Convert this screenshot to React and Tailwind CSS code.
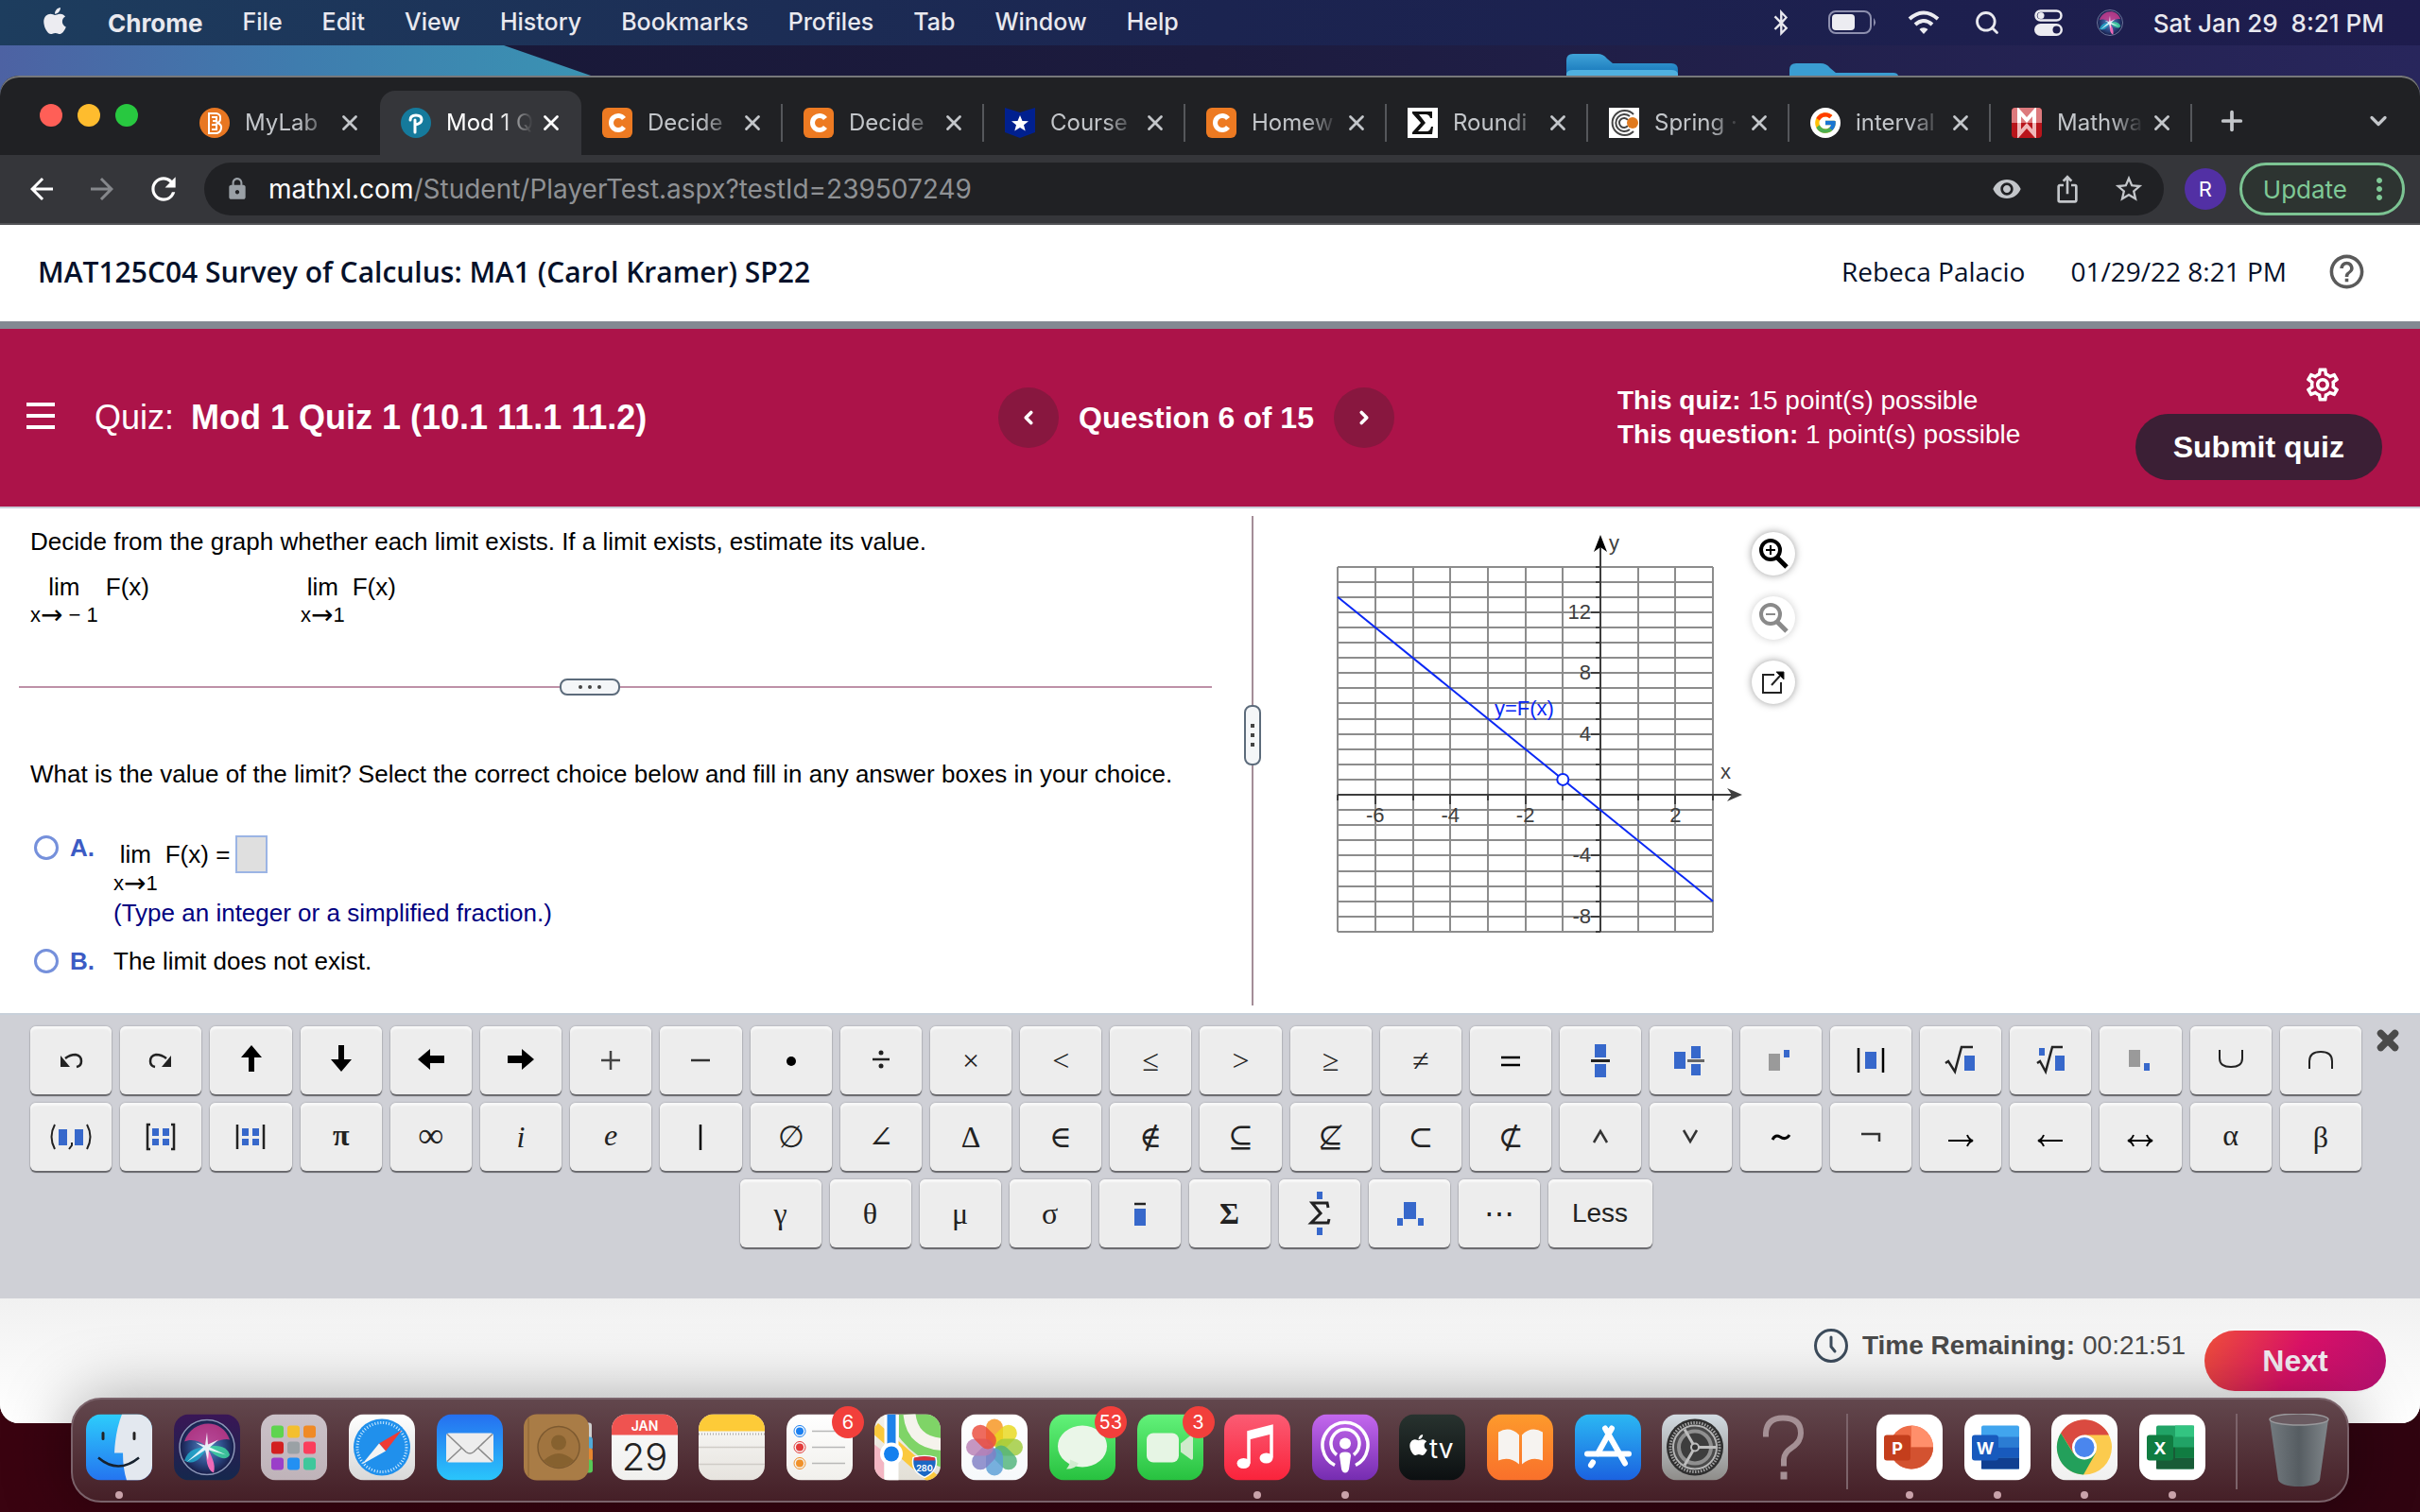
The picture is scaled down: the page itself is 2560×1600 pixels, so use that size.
import React from "react";
import { FaApple, FaBluetoothB } from "react-icons/fa";
import { FcGoogle } from "react-icons/fc";
import {
  MdArrowBack,
  MdArrowForward,
  MdHelpOutline,
  MdIosShare,
  MdLock,
  MdMoreVert,
  MdOutlineSettings,
  MdRefresh,
  MdStarBorder,
  MdVisibility,
} from "react-icons/md";
import { ChevronDown, ChevronLeft, ChevronRight, Plus, Search, X } from "lucide-react";

const BLUE = "#3768cb";

/* ================= MENU BAR ================= */

const menus = ["File", "Edit", "View", "History", "Bookmarks", "Profiles", "Tab", "Window", "Help"];

function SiriOrb({ size }) {
  return (
    <svg width={size} height={size} viewBox="0 0 60 60">
      <defs>
        <radialGradient id="orb" cx="50%" cy="50%" r="50%">
          <stop offset="0" stopColor="#5b8fc8" />
          <stop offset="0.6" stopColor="#2c4a86" />
          <stop offset="1" stopColor="#171c48" />
        </radialGradient>
      </defs>
      <circle cx="30" cy="30" r="29" fill="url(#orb)" stroke="#8c97b8" strokeWidth="1.5" />
      <path d="M6 24 C14 0 46 -2 54 22 C48 20 38 24 30 30 C24 24 14 20 6 24Z" fill="#d13a8c" opacity="0.8" />
      <path d="M6 44 C10 32 20 30 30 30 C24 42 16 50 6 44Z" fill="#22b5d6" opacity="0.75" />
      <path d="M30 30 C42 26 52 30 54 38 C50 46 38 40 30 30Z" fill="#3fd6a0" opacity="0.85" />
      <path d="M30 30 C34 38 40 48 37 57 C30 54 28 42 30 30Z" fill="#ee6ab8" />
      <path d="M30 14 L31 27 L42 22 L33 30 L50 38 L32 33 L31 44 L28 33 L8 46 L26 30 L18 25 L28 28Z" fill="#f3fbff" opacity="0.9" />
    </svg>
  );
}

function MenuBar() {
  return (
    <header className="relative flex h-12 items-center bg-gradient-to-r from-[#1d3d5e] via-[#1b2450] to-[#1e1c4d] pr-[38px] pl-[42px] text-[25px] font-medium text-[#e9e9ef]">
      <FaApple size={32} className="mb-1 text-[#ececf1]" />
      <nav className="ml-10 flex items-center gap-[42px]">
        <button className="text-[26px] font-bold">Chrome</button>
        {menus.map((m) => (
          <button key={m}>{m}</button>
        ))}
      </nav>
      <div className="ml-auto flex items-center">
        <FaBluetoothB size={28} />
        <svg className="ml-9" width="52" height="26" viewBox="0 0 52 26">
          <rect x="1" y="1" width="44" height="23" rx="7" fill="none" stroke="#8d8fae" strokeWidth="2" />
          <rect x="4" y="4" width="24" height="17" rx="4" fill="#ececf1" />
          <path d="M48 8 q4 4.5 0 9Z" fill="#8d8fae" />
        </svg>
        <svg className="ml-8" width="34" height="26" viewBox="0 0 34 26" fill="none" stroke="#ececf1" strokeWidth="4">
          <path d="M2 9 Q17 -4 32 9" />
          <path d="M8 15 Q17 7 26 15" />
          <path d="M17 25 L12.5 20 Q17 16.5 21.5 20Z" fill="#ececf1" stroke="none" />
        </svg>
        <Search size={28} className="ml-9" strokeWidth={2.4} />
        <svg className="ml-9" width="30" height="28" viewBox="0 0 30 28">
          <rect x="1.5" y="1.5" width="27" height="10" rx="5" fill="none" stroke="#ececf1" strokeWidth="2.5" />
          <circle cx="7" cy="6.5" r="3.5" fill="#ececf1" />
          <rect x="0" y="15" width="30" height="13" rx="6.5" fill="#ececf1" />
          <circle cx="23.5" cy="21.5" r="4" fill="#1d1d4d" />
        </svg>
        <div className="ml-9">
          <SiriOrb size={28} />
        </div>
        <span className="ml-8 text-[26px] whitespace-pre">Sat Jan 29  8:21 PM</span>
      </div>
    </header>
  );
}

function Wallpaper() {
  return (
    <div className="absolute inset-x-0 top-12 h-20 bg-gradient-to-r from-[#171735] via-[#1c1b3e] to-[#28265c]">
      <svg width="100%" height="80">
        <defs>
          <linearGradient id="sweep" x1="0" y1="0" x2="1" y2="0">
            <stop offset="0" stopColor="#4d62a3" />
            <stop offset="0.5" stopColor="#3f7cae" />
            <stop offset="1" stopColor="#3a93b3" />
          </linearGradient>
          <linearGradient id="folder" x1="0" y1="0" x2="0" y2="1">
            <stop offset="0" stopColor="#3fa3d8" />
            <stop offset="1" stopColor="#1574b8" />
          </linearGradient>
        </defs>
        <path d="M0 0 H533 L625 32 V80 H0Z" fill="url(#sweep)" />
        <path d="M1657 32 V16 Q1657 9 1664 9 H1690 Q1696 9 1700 14 L1706 19 H1768 Q1775 19 1775 26 V32Z" fill="url(#folder)" />
        <path d="M1657 32 V30 Q1658 26 1664 26 H1768 Q1774 26 1775 30 V32Z" fill="#4fb0df" />
        <path d="M1893 32 V26 Q1893 19 1900 19 H1926 Q1932 19 1936 24 L1942 29 H2003 Q2007 29 2008 32Z" fill="#3a9dd2" />
      </svg>
    </div>
  );
}

/* ================= BROWSER CHROME ================= */

const CheggIcon = () => (
  <svg width="32" height="32" viewBox="0 0 32 32">
    <rect width="32" height="32" rx="6" fill="#ed7a22" />
    <path d="M23 11.5 A7.5 7.5 0 1 0 23 20.5" fill="none" stroke="#fff" strokeWidth="5" />
  </svg>
);

const favicons = {
  mylab: (
    <svg width="32" height="32" viewBox="0 0 32 32">
      <circle cx="16" cy="16" r="16" fill="#e87722" />
      <path d="M10 6 H18 Q23 7 22 12 Q22 15 19 16 Q24 18 23 22 Q22 27 17 27 H10Z M13 10 H18 V14 H14 M13 18 H18 V23 H13 M10 6 V27" fill="none" stroke="#fff" strokeWidth="2" />
    </svg>
  ),
  pearson: (
    <svg width="32" height="32" viewBox="0 0 32 32">
      <circle cx="16" cy="16" r="16" fill="#157a9c" />
      <path d="M10 13 Q10 8 16 8 Q22 8 22 12.5 Q22 17 15 18 M15 13 V26" fill="none" stroke="#fff" strokeWidth="3" strokeLinecap="round" />
    </svg>
  ),
  chegg: <CheggIcon />,
  star: (
    <svg width="32" height="32" viewBox="0 0 32 32">
      <path d="M0 0 L16 5 L32 0 V26 L16 32 L0 26Z" fill="#00208f" />
      <path d="M16 8 L18.5 14 L25 14.3 L20 18.3 L21.7 24.5 L16 21 L10.3 24.5 L12 18.3 L7 14.3 L13.5 14Z" fill="#fff" />
    </svg>
  ),
  sigma: (
    <svg width="32" height="32" viewBox="0 0 32 32">
      <rect width="32" height="32" fill="#fff" />
      <path d="M5 4 H26 V11 H24 Q23 7 19 7 H12 L19 16 L11 25 H20 Q24 25 25 20 H27 L26 28 H5 V26 L14 16 L5 6Z" fill="#111" />
    </svg>
  ),
  spring: (
    <svg width="32" height="32" viewBox="0 0 32 32">
      <rect width="32" height="32" fill="#fff" />
      <path d="M26 7 A13 13 0 1 0 26 25 M22 9 A9 9 0 1 0 22 23 M20 13 A5 5 0 1 0 20 19" fill="none" stroke="#444" strokeWidth="2" />
      <circle cx="25" cy="16" r="6" fill="#e07a1f" />
    </svg>
  ),
  google: (
    <span className="flex size-8 items-center justify-center rounded-full bg-white">
      <FcGoogle size={26} />
    </span>
  ),
  mathway: (
    <svg width="32" height="32" viewBox="0 0 32 32">
      <rect width="32" height="32" rx="4" fill="#b9151b" />
      <path d="M0 16 V4 Q0 0 4 0 H28 Q32 0 32 4 V16Z" fill="#dd7a7d" />
      <path d="M8 16 V4 L16 13 L24 4 V16" fill="none" stroke="#fff" strokeWidth="4" />
      <path d="M8 16 V28 L16 19 L24 28 V16" fill="none" stroke="#f0b8b9" strokeWidth="4" />
    </svg>
  ),
};

const tabs = [
  { icon: "mylab", title: "MyLab" },
  { icon: "pearson", title: "Mod 1 Q", active: true },
  { icon: "chegg", title: "Decide" },
  { icon: "chegg", title: "Decide" },
  { icon: "star", title: "Course" },
  { icon: "chegg", title: "Homew" },
  { icon: "sigma", title: "Roundi" },
  { icon: "spring", title: "Spring ·" },
  { icon: "google", title: "interval" },
  { icon: "mathway", title: "Mathwa" },
];

function Tab({ tab, divider }) {
  return (
    <div
      className={
        tab.active
          ? "flex h-[68px] w-[213px] items-center self-end rounded-t-2xl bg-[#35363a] pl-[22px] text-white"
          : "flex h-[68px] w-[213px] items-center self-end pl-[22px] text-[#c3c6ca]"
      }
    >
      <span className="shrink-0">{favicons[tab.icon]}</span>
      <button className="ml-4 w-24 text-left text-2xl whitespace-nowrap [mask-image:linear-gradient(to_right,black_60%,transparent_96%)]">
        {tab.title}
      </button>
      <button aria-label="Close tab" className="ml-0.5">
        <X size={26} strokeWidth={2.6} />
      </button>
      {divider && <span className="ml-auto h-10 w-0.5 bg-[#55575b]" />}
    </div>
  );
}

function TabStrip() {
  return (
    <div className="flex h-[84px] items-center pr-[30px]">
      <div className="flex w-[189px] shrink-0 gap-4 pl-[42px]">
        <button aria-label="Close" className="size-6 rounded-full bg-[#ff5f57]" />
        <button aria-label="Minimise" className="size-6 rounded-full bg-[#febc2e]" />
        <button aria-label="Zoom" className="size-6 rounded-full bg-[#28c840]" />
      </div>
      {tabs.map((tab, i) => (
        <Tab key={i} tab={tab} divider={i > 1} />
      ))}
      <button aria-label="New tab" className="ml-[26px] pt-3 text-[#c3c6ca]">
        <Plus size={32} strokeWidth={2.8} />
      </button>
      <button aria-label="Search tabs" className="ml-auto pt-3 text-[#c3c6ca]">
        <ChevronDown size={28} strokeWidth={2.8} />
      </button>
    </div>
  );
}

function Toolbar() {
  return (
    <div className="flex h-[74px] items-center border-b-2 border-[#515256] bg-[#35363a] pr-4 pl-[26px]">
      <button aria-label="Back" className="text-white">
        <MdArrowBack size={36} />
      </button>
      <button aria-label="Forward" className="ml-7 text-[#85878b]">
        <MdArrowForward size={36} />
      </button>
      <button aria-label="Reload" className="ml-7 text-white">
        <MdRefresh size={38} />
      </button>
      <div className="ml-6 flex h-14 flex-1 items-center rounded-full bg-[#202124] pr-5 pl-[22px] text-[#c3c6ca]">
        <MdLock size={26} className="text-[#9aa0a6]" />
        <div role="textbox" aria-label="Address" className="ml-5 text-[28px] text-[#8f9194]">
          <span className="text-white">mathxl.com</span>/Student/PlayerTest.aspx?testId=239507249
        </div>
        <div className="ml-auto flex items-center gap-8">
          <button aria-label="Site visibility">
            <MdVisibility size={32} />
          </button>
          <button aria-label="Share">
            <MdIosShare size={32} />
          </button>
          <button aria-label="Bookmark">
            <MdStarBorder size={34} />
          </button>
        </div>
      </div>
      <button className="ml-[22px] size-11 rounded-full bg-[#5230a4] text-[22px] text-white">R</button>
      <button className="ml-3.5 flex h-14 items-center rounded-full border-3 border-[#7cc493] bg-[#2d3431] pr-1.5 pl-[22px] text-[26px] text-[#7fc996]">
        Update
        <MdMoreVert size={36} className="ml-4" />
      </button>
    </div>
  );
}

/* ================= QUIZ HEADER ================= */

function CourseBar() {
  return (
    <div className="flex h-[110px] items-center border-b-8 border-[#838992] bg-white pr-[56px] pb-1 pl-10 font-['Open_Sans',sans-serif] text-[28px] text-[#05112a]">
      <h1 className="mr-auto text-[30px] font-semibold">
        MAT125C04 Survey of Calculus: MA1 (Carol Kramer) SP22
      </h1>
      <span>Rebeca Palacio</span>
      <span className="ml-12">01/29/22 8:21 PM</span>
      <button aria-label="Help" className="ml-[42px] text-[#5a5a5a]">
        <MdHelpOutline size={43} />
      </button>
    </div>
  );
}

function QuizBar() {
  return (
    <div className="grid h-[190px] grid-cols-[1056fr_655fr_849fr] items-center border-b-2 border-[#c9ced8] bg-[#ac1349] text-white">
      <div className="flex items-center pl-7">
        <button aria-label="Menu" className="mb-1 flex w-[30px] flex-col gap-2">
          <span className="h-1 bg-white" />
          <span className="h-1 bg-white" />
          <span className="h-1 bg-white" />
        </button>
        <h2 className="ml-[42px] flex gap-[18px] text-[36px]">
          Quiz: <b>Mod 1 Quiz 1 (10.1 11.1 11.2)</b>
        </h2>
      </div>
      <div className="flex items-center gap-[21px]">
        <button aria-label="Previous question" className="flex size-16 items-center justify-center rounded-full bg-[#88173f]">
          <ChevronLeft size={22} strokeWidth={4} />
        </button>
        <span className="text-[32px] font-bold">Question 6 of 15</span>
        <button aria-label="Next question" className="flex size-16 items-center justify-center rounded-full bg-[#88173f]">
          <ChevronRight size={22} strokeWidth={4} />
        </button>
      </div>
      <div className="flex items-center justify-between pr-10">
        <div className="text-[28px] leading-9">
          <p>
            <b>This quiz:</b> 15 point(s) possible
          </p>
          <p>
            <b>This question:</b> 1 point(s) possible
          </p>
        </div>
        <div className="flex flex-col items-end gap-2.5 pt-2.5">
          <button aria-label="Settings" className="mr-[42px]">
            <MdOutlineSettings size={42} />
          </button>
          <button className="h-[70px] rounded-full bg-[#3b1f35] px-10 text-[32px] font-bold">Submit quiz</button>
        </div>
      </div>
    </div>
  );
}

/* ================= QUESTION ================= */

const Arrow = () => <span className="font-['DejaVu_Sans',sans-serif] text-[28px] leading-none">→</span>;

function Limit({ to, children }) {
  return (
    <div className="grid grid-cols-[auto_auto] items-center gap-x-2">
      <span className="h-[30px] text-center">lim</span>
      <span className="flex h-[30px] items-center">{children}</span>
      <span className="flex h-[30px] items-center text-[22px] whitespace-pre">
        x<Arrow />
        {to}
      </span>
    </div>
  );
}

function Problem() {
  return (
    <section className="pt-5 text-[26px] leading-[30px] text-black">
      <p className="pl-8">Decide from the graph whether each limit exists. If a limit exists, estimate its value.</p>
      <div className="mt-[18px] flex gap-40 pl-8">
        <Limit to=" − 1">F(x)</Limit>
        <Limit to="1">F(x)</Limit>
      </div>

      <div className="mt-[52px] mr-[34px] ml-5 flex items-center">
        <span className="h-0.5 w-[572px] bg-[#be91a7]" />
        <button aria-label="Resize panel" className="flex h-[18px] w-16 items-center justify-center gap-1.5 rounded-lg border-2 border-[#5c6b7b] bg-[#f4f6f8]">
          <i className="size-1 rounded-full bg-[#444]" />
          <i className="size-1 rounded-full bg-[#444]" />
          <i className="size-1 rounded-full bg-[#444]" />
        </button>
        <span className="h-0.5 flex-1 bg-[#be91a7]" />
      </div>

      <p className="mt-[68px] pl-8">
        What is the value of the limit? Select the correct choice below and fill in any answer boxes in your choice.
      </p>

      <div className="mt-[50px] flex pl-9">
        <input id="choice-a" type="radio" name="choice" className="size-[26px] appearance-none rounded-full border-3 border-[#7590db] bg-white" />
        <label htmlFor="choice-a" className="ml-3 w-[46px] leading-[26px] font-bold text-[#3c5bc4]">
          A.
        </label>
        <div>
          <div className="grid grid-cols-[auto_1fr] items-center gap-x-2">
            <span className="text-center">lim</span>
            <span className="flex items-center gap-1.5">
              F(x) =
              <input aria-label="Answer" className="h-10 w-[34px] border-2 border-[#9bb4e4] bg-[#dfdfdf]" />
            </span>
            <span className="flex h-[22px] items-center text-[22px] whitespace-pre">
              x<Arrow />1
            </span>
          </div>
          <p className="mt-1 leading-8 text-[#000080]">(Type an integer or a simplified fraction.)</p>
        </div>
      </div>

      <div className="mt-[22px] flex items-center pl-9 leading-[26px]">
        <input id="choice-b" type="radio" name="choice" className="size-[26px] appearance-none rounded-full border-3 border-[#7590db] bg-white" />
        <label htmlFor="choice-b" className="flex">
          <b className="ml-3 w-[46px] text-[#3c5bc4]">B.</b>
          The limit does not exist.
        </label>
      </div>
    </section>
  );
}

// plot origin and the pixels per unit on each axis
const OX = 293;
const OY = 283;
const px = (x) => OX + x * 39.7;
const py = (y) => OY - y * 16.1;

function Graph() {
  const cols = Array.from({ length: 11 }, (_, i) => i - 7);
  const rows = Array.from({ length: 25 }, (_, i) => i - 9);

  return (
    <svg width="446" height="440" viewBox="0 0 446 440" fontSize="22" fill="#404040" className="overflow-visible">
      <g stroke="#8c8c8c" strokeWidth="2" shapeRendering="crispEdges">
        {cols.map((x) => (
          <line key={x} x1={px(x)} x2={px(x)} y1={py(15)} y2={py(-9)} />
        ))}
        {rows.map((y) => (
          <line key={y} x1={px(-7)} x2={px(3)} y1={py(y)} y2={py(y)} />
        ))}
      </g>
      <g stroke="#3d3d3d" strokeWidth="2" shapeRendering="crispEdges">
        <line x1={px(-7)} x2="432" y1={OY} y2={OY} />
        <line x1={OX} x2={OX} y1="20" y2={py(-9)} />
        {cols.map((x) => (
          <line key={x} x1={px(x)} x2={px(x)} y1={OY} y2={x % 2 ? OY + 6 : OY + 10} />
        ))}
        {rows.map((y) => (
          <line key={y} x1={y % 4 ? OX - 5 : OX - 10} x2={OX} y1={py(y)} y2={py(y)} />
        ))}
      </g>
      <path d="M293 8 L300 26 L293 21 L286 26Z" fill="#000" />
      <path d="M443 283 L427 290 L432 283 L427 276Z" />
      <text x="302" y="24">y</text>
      <text x="420" y="266">x</text>
      {[12, 8, 4, -4, -8].map((y) => (
        <text key={y} x={OX - 10} y={py(y) + 7} textAnchor="end">{y}</text>
      ))}
      {[-6, -4, -2, 2].map((x) => (
        <text key={x} x={px(x)} y={OY + 29} textAnchor="middle">{x}</text>
      ))}
      <line x1={px(-7)} y1={py(13)} x2={px(3)} y2={py(-7)} stroke="#0a28f5" strokeWidth="2" />
      <text x="181" y="199" fill="#0a28f5">y=F(x)</text>
      <circle cx={px(-1)} cy={py(1)} r="6" fill="#fff" stroke="#0a28f5" strokeWidth="2" />
    </svg>
  );
}

const roundBtn = "flex size-[46px] items-center justify-center rounded-full bg-white shadow-[0_0_8px_rgba(0,0,0,0.4)]";

function GraphPanel() {
  return (
    <section className="flex gap-[7px] pt-5 pl-[66px]">
      <Graph />
      <div className="flex flex-col gap-[22px] pt-[5px]">
        <button aria-label="Zoom in" className={roundBtn}>
          <svg width="32" height="32" viewBox="0 0 32 32" fill="none" stroke="#000">
            <circle cx="13" cy="12" r="10" strokeWidth="4" />
            <path d="M20 20 L30 30" strokeWidth="5" />
            <path d="M8 12 H18 M13 7 V17" strokeWidth="2" />
          </svg>
        </button>
        <button aria-label="Zoom out" className="flex size-[46px] items-center justify-center rounded-full bg-white shadow-[0_0_8px_rgba(0,0,0,0.2)]">
          <svg width="32" height="32" viewBox="0 0 32 32" fill="none" stroke="#8a8a8a">
            <circle cx="13" cy="12" r="10" strokeWidth="4" />
            <path d="M20 20 L30 30" strokeWidth="5" />
            <path d="M8 12 H18" strokeWidth="2" />
          </svg>
        </button>
        <button aria-label="Open in new window" className={roundBtn}>
          <svg width="26" height="26" viewBox="0 0 26 26" fill="none" stroke="#222" strokeWidth="2">
            <path d="M14 5 H2 V24 H21 V13" />
            <path d="M11 16 L21 5" />
            <path d="M16 2 H24 V10Z" fill="#000" strokeWidth="1" />
          </svg>
        </button>
      </div>
    </section>
  );
}

/* ================= MATH KEYPAD ================= */

// blue placeholder squares of the template keys
const B = ({ x, y, w, h, fill = BLUE }) => <rect x={x} y={y} width={w} height={h} fill={fill} />;

const Draw = ({ children }) => (
  <svg width="46" height="46" viewBox="0 0 46 46" fill="none" stroke="#222" strokeWidth="2">
    <g>{children}</g>
  </svg>
);

const nofill = { stroke: "none" };

const glyphs = {
  undo: <Draw><path d="M17 21 Q22 17 28 17 Q34 18 34 24 Q34 29 29 30" strokeWidth="2.5" /><path d="M12 18 V30 H22Z" fill="#222" {...nofill} /></Draw>,
  redo: <Draw><path d="M29 21 Q24 17 18 17 Q12 18 12 24 Q12 29 17 30" strokeWidth="2.5" /><path d="M34 18 V30 H24Z" fill="#222" {...nofill} /></Draw>,
  up: <Draw><path d="M24 7 L35 20 H27 V35 H21 V20 H13Z" fill="#000" {...nofill} /></Draw>,
  down: <Draw><path d="M23 35 L34 22 H26 V7 H20 V22 H12Z" fill="#000" {...nofill} /></Draw>,
  left: <Draw><path d="M9 22 L22 11 V18 H37 V26 H22 V33Z" fill="#000" {...nofill} /></Draw>,
  right: <Draw><path d="M37 22 L24 11 V18 H9 V26 H24 V33Z" fill="#000" {...nofill} /></Draw>,
  plus: <Draw><path d="M13 23 H33 M23 13 V33" stroke="#444" strokeWidth="2.5" /></Draw>,
  minus: <Draw><path d="M13 23 H33" stroke="#333" strokeWidth="2.5" /></Draw>,
  dot: <Draw><circle cx="23" cy="24" r="5" fill="#000" {...nofill} /></Draw>,
  divide: <Draw><path d="M14 22 H32" strokeWidth="2.5" /><circle cx="23" cy="15" r="2.5" fill="#222" {...nofill} /><circle cx="23" cy="29" r="2.5" fill="#222" {...nofill} /></Draw>,
  equals: <Draw><path d="M13 20 H33 M13 28 H33" stroke="#000" strokeWidth="2.5" /></Draw>,
  pipe: <Draw><path d="M23 10 V37" stroke="#000" strokeWidth="2.5" /></Draw>,
  tilde: <Draw><path d="M14 26 Q17 20 22 23 Q28 27 32 21" stroke="#000" strokeWidth="3" /></Draw>,
  not: <Draw><path d="M13 20 H32 V28" stroke="#333" strokeWidth="2.5" /></Draw>,
  and: <Draw><path d="M16 29 L23 17 L30 29" stroke="#333" strokeWidth="2.5" /></Draw>,
  or: <Draw><path d="M16 16 L23 28 L30 16" stroke="#333" strokeWidth="2.5" /></Draw>,
  rarr: <Draw><path d="M10 27 H36 M30 21 Q32 26 36 27 Q32 28 30 33" stroke="#000" /></Draw>,
  larr: <Draw><path d="M36 27 H10 M16 21 Q14 26 10 27 Q14 28 16 33" stroke="#000" /></Draw>,
  lrarr: <Draw><path d="M10 27 H36 M30 21 Q32 26 36 27 Q32 28 30 33 M16 21 Q14 26 10 27 Q14 28 16 33" stroke="#000" /></Draw>,
  frac: <Draw><g {...nofill}><B x={17} y={6} w={12} h={14} /><B x={17} y={27} w={12} h={14} /></g><path d="M13 23.5 H33" strokeWidth="3" /></Draw>,
  mixed: <Draw><g {...nofill}><B x={6} y={14} w={12} h={18} /><B x={24} y={8} w={10} h={13} /><B x={24} y={27} w={10} h={12} /></g><path d="M20 23.5 H38" stroke="#666" strokeWidth="3" /></Draw>,
  sup: <Draw><g {...nofill}><B x={10} y={16} w={12} h={18} fill="#9a9a9a" /><B x={26} y={12} w={6} h={8} /></g></Draw>,
  abs: <Draw><g {...nofill}><B x={17} y={14} w={12} h={18} /></g><path d="M10 10 V36 M36 10 V36" stroke="#000" strokeWidth="2.5" /></Draw>,
  sqrt: <Draw><path d="M7 26 L10 24 L17 35 L24 9 H36" strokeWidth="2.5" /><g {...nofill}><B x={27} y={18} w={11} h={16} /></g></Draw>,
  root: <Draw><path d="M9 26 L12 24 L18 35 L25 9 H36" strokeWidth="2.5" /><g {...nofill}><B x={11} y={10} w={6} h={8} /><B x={28} y={18} w={10} h={16} /></g></Draw>,
  sub: <Draw><g {...nofill}><B x={11} y={12} w={12} h={18} fill="#9a9a9a" /><B x={27} y={26} w={6} h={8} /></g></Draw>,
  cup: <Draw><path d="M11 12 V21 Q11 30 23 30 Q35 30 35 21 V12" /></Draw>,
  cap: <Draw><path d="M11 32 V24 Q11 14 23 14 Q35 14 35 24 V32" /></Draw>,
  pair: <Draw><path d="M6 10 Q-1 23 6 36 M40 10 Q47 23 40 36" /><g {...nofill}><B x={10} y={15} w={9} h={17} /><B x={27} y={15} w={9} h={17} /></g><path d="M24 29 V32 L21 36" /></Draw>,
  matrix: <Draw><path d="M12 10 H9 V36 H12 M34 10 H37 V36 H34" strokeWidth="2.5" /><g {...nofill}><B x={14} y={14} w={7} h={8} /><B x={25} y={14} w={7} h={8} /><B x={14} y={25} w={7} h={7} /><B x={25} y={25} w={7} h={7} /></g></Draw>,
  det: <Draw><path d="M9 10 V36 M37 10 V36" strokeWidth="2.5" /><g {...nofill}><B x={14} y={14} w={7} h={8} /><B x={25} y={14} w={7} h={8} /><B x={14} y={25} w={7} h={7} /><B x={25} y={25} w={7} h={7} /></g></Draw>,
  bar: <Draw><path d="M17 13 H29" strokeWidth="2.5" /><g {...nofill}><B x={17} y={18} w={12} h={18} /></g></Draw>,
  limits: <Draw><path d="M32 17 L31 12 H15 L24 23 L14 33 H32 L33 29" strokeWidth="3" /><g {...nofill}><B x={20} y={0} w={6} h={8} /><B x={20} y={38} w={6} h={8} /></g></Draw>,
  tri: <Draw><g {...nofill}><B x={17} y={11} w={13} h={18} /><B x={10} y={28} w={6} h={8} /><B x={32} y={28} w={6} h={8} /></g></Draw>,
};

const keyRows = [
  ["undo", "redo", "up", "down", "left", "right", "plus", "minus", "dot", "divide", "×", "<", "≤", ">", "≥", "≠", "equals", "frac", "mixed", "sup", "abs", "sqrt", "root", "sub", "cup", "cap"],
  ["pair", "matrix", "det", "π", "∞", "i", "e", "pipe", "∅", "∠", "Δ", "∈", "∉", "⊆", "⊈", "⊂", "⊄", "and", "or", "tilde", "not", "rarr", "larr", "lrarr", "α", "β"],
  ["γ", "θ", "μ", "σ", "bar", "Σ", "limits", "tri", "⋯"],
];

const keyCls =
  "flex h-[72px] items-center justify-center rounded-md bg-[#ededed] text-[#222] shadow-[0_2px_1px_#66666a,0_0_2px_#8e8e94,inset_0_3px_2px_#f8f8f8]";

const keyStyle = {
  i: "italic",
  e: "italic pb-1",
  π: "font-bold pb-1",
  Σ: "font-bold",
  "∞": "text-[38px] pb-1",
  α: "pb-1",
};

function Key({ k, size }) {
  return (
    <button aria-label={k} className={`${keyCls} ${size} ${keyStyle[k] || ""}`}>
      {glyphs[k] || <span>{k}</span>}
    </button>
  );
}

function Keypad() {
  return (
    <section className="flex items-start gap-4 border-t-2 border-[#c8d0da] bg-[#cfd0d6] pt-3 pr-[22px] pb-[54px] pl-8">
      <div className="flex flex-1 flex-col gap-[9px] font-['Liberation_Serif','DejaVu_Serif',serif] text-[32px] leading-none">
        <div className="flex gap-[9px]">
          {keyRows[0].map((k) => (
            <Key key={k} k={k} size="flex-1" />
          ))}
        </div>
        <div className="flex gap-[9px]">
          {keyRows[1].map((k) => (
            <Key key={k} k={k} size="flex-1" />
          ))}
        </div>
        <div className="flex justify-center gap-[9px]">
          {keyRows[2].map((k) => (
            <Key key={k} k={k} size="w-[86px]" />
          ))}
          <button className={`${keyCls} w-[110px] font-['Liberation_Sans',sans-serif] text-[28px]`}>Less</button>
        </div>
      </div>
      <button aria-label="Close keypad" className="text-[#4a4a4a]">
        <X size={30} strokeWidth={6} className="-mx-[3px]" />
      </button>
    </section>
  );
}

function Footer() {
  return (
    <footer className="flex h-[132px] items-start justify-end bg-gradient-to-b from-[#f1f1f1] to-white pt-[34px] pr-9 text-[28px] text-[#4a4a4a]">
      <div className="mr-5 flex h-8 items-center">
        <svg width="38" height="38" viewBox="0 0 38 38" fill="none" stroke="#3d4c5c" strokeWidth="3">
          <circle cx="19" cy="19" r="16.5" />
          <path d="M19 10 V20 L23 25" strokeLinecap="round" />
        </svg>
        <b className="ml-3.5">Time Remaining:</b>
        <span className="ml-2">00:21:51</span>
      </div>
      <button className="h-16 w-48 rounded-full bg-[linear-gradient(115deg,#f0503a,#db1168_50%,#b3106f)] text-[32px] font-bold text-[#f3eef3] shadow-[0_0_0_2px_#f8f8f8]">
        Next
      </button>
    </footer>
  );
}

/* ================= DOCK ================= */

const Tile = ({ id, from, to, children }) => (
  <svg width="70" height="71" viewBox="0 0 70 70">
    <defs>
      <linearGradient id={`tile-${id}`} x1="0" y1="0" x2="0" y2="1">
        <stop offset="0" stopColor={from} />
        <stop offset="1" stopColor={to} />
      </linearGradient>
      <clipPath id={`clip-${id}`}>
        <rect width="70" height="70" rx="16" />
      </clipPath>
    </defs>
    <g clipPath={`url(#clip-${id})`}>
      <rect width="70" height="70" fill={`url(#tile-${id})`} />
      {children}
    </g>
  </svg>
);

const launchColors = ["#5fd44f", "#f3bf2e", "#f08a26", "#d3201f", "#9aa1a5", "#fb3e5c", "#9a3fc9", "#2390f2", "#3fc79b"];
const petals = ["#f7941d", "#e8d81c", "#9fcb3a", "#4fb37a", "#5a9fd6", "#7f7fc4", "#b87fb5", "#ea4a3a"];
const appFont = "Inter, sans-serif";

const OfficeBadge = ({ fill, letter }) => (
  <>
    <rect x="8" y="22" width="28" height="27" rx="3" fill={fill} />
    <text x="22" y="42" textAnchor="middle" fontSize="18" fontWeight="700" fill="#fff" fontFamily={appFont}>
      {letter}
    </text>
  </>
);

const apps = [
  {
    name: "Finder",
    running: true,
    icon: (
      <Tile id="finder" from="#2dcdfb" to="#2474f0">
        <path d="M38 0 Q31 18 30 41 H39 Q39 58 43 70 H70 V0Z" fill="#e3e8ef" />
        <path d="M18 20 V26 M51 20 V26" stroke="#222" strokeWidth="3" strokeLinecap="round" />
        <path d="M13 46 Q34 64 56 46" fill="none" stroke="#16212e" strokeWidth="2.5" />
      </Tile>
    ),
  },
  {
    name: "Siri",
    icon: (
      <Tile id="siri" from="#3a1656" to="#14284d">
        <g transform="translate(5 5)">
          <SiriOrb size={60} />
        </g>
      </Tile>
    ),
  },
  {
    name: "Launchpad",
    icon: (
      <Tile id="launch" from="#cbc2c9" to="#bfb3b9">
        {launchColors.map((c, i) => (
          <rect key={c} x={11 + (i % 3) * 17} y={12 + Math.floor(i / 3) * 17} width="13" height="13" rx="3" fill={c} />
        ))}
      </Tile>
    ),
  },
  {
    name: "Safari",
    icon: (
      <Tile id="safari" from="#ffffff" to="#d8d8d8">
        <circle cx="35" cy="35" r="30" fill="#2090ec" />
        <circle cx="35" cy="35" r="26" fill="none" stroke="#d8efff" strokeWidth="3" strokeDasharray="1 2" />
        <path d="M56 17 L39 39 L32 31Z" fill="#ef3b34" />
        <path d="M14 53 L32 31 L39 39Z" fill="#f4f4f4" />
      </Tile>
    ),
  },
  {
    name: "Mail",
    icon: (
      <Tile id="mail" from="#256ff0" to="#2ac6fb">
        <rect x="10" y="20" width="50" height="31" rx="3" fill="#ededed" />
        <path d="M11 21 L31 40 Q35 43 39 40 L59 21 M11 50 L26 36 M59 50 L44 36" fill="none" stroke="#8b8b8b" strokeWidth="1.5" />
      </Tile>
    ),
  },
  {
    name: "Contacts",
    icon: (
      <svg width="74" height="71" viewBox="0 0 74 70" className="-mr-1">
        <rect x="60" y="9" width="12" height="18" rx="3" fill="#cfcfcf" />
        <rect x="60" y="24" width="13" height="14" rx="3" fill="#4fa9d8" />
        <rect x="60" y="36" width="13" height="14" rx="3" fill="#e8862f" />
        <rect x="60" y="48" width="13" height="14" rx="3" fill="#57c955" />
        <rect width="69" height="70" rx="14" fill="#a97c46" />
        <path d="M5 4 V66" stroke="#8a6233" />
        <circle cx="37" cy="35" r="22" fill="#a0743f" stroke="#7d5a30" strokeWidth="1.5" />
        <circle cx="37" cy="30" r="8" fill="#86612f" />
        <path d="M21 49 Q37 34 53 49 Q37 64 21 49Z" fill="#86612f" />
      </svg>
    ),
  },
  {
    name: "Calendar",
    icon: (
      <Tile id="calendar" from="#fbfbfb" to="#f0f0ee">
        <rect width="70" height="22" fill="#ef5350" />
        <text x="35" y="17" textAnchor="middle" fontSize="14" fontWeight="600" fill="#fff" fontFamily={appFont}>JAN</text>
        <text x="35" y="59" textAnchor="middle" fontSize="40" fontWeight="300" fill="#222" fontFamily={appFont}>29</text>
      </Tile>
    ),
  },
  {
    name: "Notes",
    icon: (
      <Tile id="notes" from="#fafaf8" to="#e6e3de">
        <rect width="70" height="18" fill="#fdcb38" />
        <path d="M0 21 H70" stroke="#aaa" strokeWidth="2" strokeDasharray="1 2" />
        <path d="M0 35 H70 M0 53 H70" stroke="#cfccc7" strokeWidth="1.5" />
      </Tile>
    ),
  },
  {
    name: "Reminders",
    badge: "6",
    icon: (
      <Tile id="reminders" from="#ffffff" to="#f1f0ec">
        {["#1a7ff0", "#e23b3b", "#f0912a"].map((c, i) => (
          <g key={c}>
            <circle cx="14" cy={18 + i * 17} r="4" fill={c} />
            <circle cx="14" cy={18 + i * 17} r="6" fill="none" stroke={c} />
            <path d={`M27 ${18 + i * 17} H62`} stroke="#b8b8b8" strokeWidth="1.5" />
          </g>
        ))}
      </Tile>
    ),
  },
  {
    name: "Maps",
    icon: (
      <Tile id="maps" from="#f3f1ea" to="#e2dfd6">
        <path d="M26 0 H70 V56 Q42 46 26 24Z" fill="#7fd467" />
        <path d="M37 0 Q40 30 72 32" fill="none" stroke="#f5f3ec" strokeWidth="13" />
        <path d="M0 14 L66 72" stroke="#fbc93d" strokeWidth="12" />
        <path d="M0 32 V70 H10 V40Z" fill="#f3b6c3" />
        <path d="M18 0 V70" stroke="#fff" strokeWidth="15" />
        <path d="M18 0 V40" stroke="#1d82ea" strokeWidth="9" />
        <circle cx="18" cy="42" r="12" fill="#fff" />
        <circle cx="18" cy="42" r="8" fill="#1480ee" />
        <path d="M41 46 Q53 42 65 46 Q68 60 53 67 Q38 60 41 46Z" fill="#1b68c4" stroke="#fff" strokeWidth="1.5" />
        <path d="M42 49 V46 Q53 43 64 46 V49Z" fill="#d8323c" />
        <text x="53" y="60" textAnchor="middle" fontSize="9" fontWeight="700" fill="#fff" fontFamily={appFont}>280</text>
      </Tile>
    ),
  },
  {
    name: "Photos",
    icon: (
      <Tile id="photos" from="#ffffff" to="#f6f9fb">
        {petals.map((c, i) => (
          <rect key={c} x="26" y="5" width="18" height="29" rx="9" fill={c} opacity="0.82" transform={`rotate(${i * 45} 35 35)`} />
        ))}
      </Tile>
    ),
  },
  {
    name: "Messages",
    badge: "53",
    icon: (
      <Tile id="messages" from="#63f27a" to="#27c13f">
        <ellipse cx="35" cy="34" rx="26" ry="22" fill="#eaf6e8" />
        <path d="M22 48 Q22 54 18 58 Q28 58 31 52Z" fill="#d3ecd0" />
      </Tile>
    ),
  },
  {
    name: "FaceTime",
    badge: "3",
    icon: (
      <Tile id="facetime" from="#63f27a" to="#27c13f">
        <rect x="10" y="20" width="34" height="31" rx="7" fill="#e6f5e4" />
        <path d="M46 31 L57 22 Q59 22 59 25 V46 Q59 49 57 48 L46 40Z" fill="#cfeacb" />
      </Tile>
    ),
  },
  {
    name: "Music",
    running: true,
    icon: (
      <Tile id="music" from="#fb5c74" to="#fa233b">
        <path d="M26 52 V19 L50 13 V46" fill="none" stroke="#fff" strokeWidth="3.5" />
        <path d="M26 19 L50 13 V21 L26 27Z" fill="#fff" />
        <ellipse cx="20.5" cy="52" rx="7" ry="5.5" fill="#fff" />
        <ellipse cx="44.5" cy="46.5" rx="7" ry="5.5" fill="#fff" />
      </Tile>
    ),
  },
  {
    name: "Podcasts",
    running: true,
    icon: (
      <Tile id="podcasts" from="#c468ee" to="#752cb0">
        <g fill="none" stroke="#fff" strokeWidth="3.5">
          <path d="M24 54 A24 24 0 1 1 46 54" />
          <path d="M26 43 A15 15 0 1 1 44 43" />
        </g>
        <circle cx="35" cy="31" r="6" fill="#fff" />
        <path d="M29 44 Q29 40 35 40 Q41 40 41 44 L39 58 Q38 62 35 62 Q32 62 31 58Z" fill="#fff" />
      </Tile>
    ),
  },
  {
    name: "TV",
    icon: (
      <Tile id="tv" from="#28332f" to="#0c0f11">
        <g color="#fff">
          <FaApple x="8" y="20" size={25} />
        </g>
        <text x="32" y="46" fontSize="28" fill="#fff" fontFamily={appFont}>tv</text>
      </Tile>
    ),
  },
  {
    name: "Books",
    icon: (
      <Tile id="books" from="#fd9a2c" to="#f9702b">
        <path d="M34 22 Q24 12 12 19 V49 Q24 44 34 53Z M37 22 Q47 12 59 19 V49 Q47 44 37 53Z" fill="#f6f3f0" />
      </Tile>
    ),
  },
  {
    name: "App Store",
    icon: (
      <Tile id="appstore" from="#2bb8f3" to="#1b62e0">
        <path d="M39 15 L24 42 M32 15 L53 52 M13 42 H57 M19 51 L17 54" stroke="#fff" strokeWidth="6" strokeLinecap="round" />
      </Tile>
    ),
  },
  {
    name: "System Preferences",
    icon: (
      <Tile id="prefs" from="#d3dce3" to="#8e8c89">
        <circle cx="35" cy="35" r="30" fill="#2f2f2f" />
        <circle cx="35" cy="35" r="26" fill="none" stroke="#a5a5a5" strokeWidth="3" strokeDasharray="1.5 1.5" />
        <circle cx="35" cy="35" r="23" fill="#4a4a4a" stroke="#b5b5b5" strokeWidth="2" />
        <circle cx="35" cy="35" r="17" fill="#3d3d3d" stroke="#8f8f8f" strokeWidth="4" />
        <path d="M35 35 H57 M35 35 L24 16 M35 35 L24 54" stroke="#bdbdbd" strokeWidth="3" />
        <circle cx="35" cy="35" r="4" fill="#333" stroke="#bdbdbd" strokeWidth="2" />
      </Tile>
    ),
  },
  {
    name: "Missing app",
    icon: (
      <svg width="70" height="71" viewBox="0 0 70 70" fill="none" stroke="#a59095" strokeWidth="6">
        <path d="M17 24 V20 Q18 4 35 4 Q54 4 54 20 Q54 29 45 35 Q36 41 36 48 V55" />
        <path d="M36 61 V69" strokeWidth="7" />
      </svg>
    ),
  },
];

const pinned = [
  {
    name: "PowerPoint",
    running: true,
    icon: (
      <Tile id="ppt" from="#ffffff" to="#ffffff">
        <circle cx="37" cy="35" r="23" fill="#ed6c47" />
        <path d="M37 12 A23 23 0 0 1 60 35 H37Z" fill="#ff8f6b" />
        <path d="M60 35 A23 23 0 0 1 14 35Z" fill="#d35230" />
        <OfficeBadge fill="#c43e1c" letter="P" />
      </Tile>
    ),
  },
  {
    name: "Word",
    running: true,
    icon: (
      <Tile id="word" from="#ffffff" to="#ffffff">
        <rect x="18" y="12" width="40" height="46" rx="2" fill="#41a5ee" />
        <path d="M18 24 H58 V35 H18Z" fill="#2b7cd3" />
        <path d="M18 35 H58 V46 H18Z" fill="#185abd" />
        <path d="M18 46 H58 V58 H18Z" fill="#103f91" />
        <OfficeBadge fill="#185abd" letter="W" />
      </Tile>
    ),
  },
  {
    name: "Chrome",
    running: true,
    icon: (
      <Tile id="chrome" from="#ffffff" to="#f0f0f0">
        <circle cx="35" cy="35" r="29" fill="#fccb4e" />
        <path d="M35 22 H61 A29 29 0 0 0 10 20 L24 42 L35 35Z" fill="#da4a40" />
        <path d="M10 20 A29 29 0 0 0 34 64 L47 41 L35 48 L23 41Z" fill="#23a05b" />
        <circle cx="35" cy="35" r="13" fill="#fff" />
        <circle cx="35" cy="35" r="10.5" fill="#4a86ee" />
      </Tile>
    ),
  },
  {
    name: "Excel",
    running: true,
    icon: (
      <Tile id="excel" from="#ffffff" to="#ffffff">
        <rect x="18" y="12" width="40" height="46" rx="2" fill="#21a366" />
        <path d="M38 12 H58 V24 H38Z" fill="#33c481" />
        <path d="M18 35 H38 V46 H18Z M18 46 H58 V58 H18Z" fill="#185c37" />
        <path d="M38 35 H58 V46 H38Z" fill="#107c41" />
        <OfficeBadge fill="#107c41" letter="X" />
      </Tile>
    ),
  },
];

function DockItem({ app }) {
  return (
    <button aria-label={app.name} className="relative size-[70px]">
      {app.icon}
      {app.badge && (
        <span className="absolute -top-2 -right-3 flex size-[34px] items-center justify-center rounded-full bg-[#f23f3b] text-xl text-white">
          {app.badge}
        </span>
      )}
      {app.running && <span className="absolute -bottom-5 left-[31px] size-2 rounded-full bg-[#c9a2aa]" />}
    </button>
  );
}

function Dock() {
  return (
    <nav className="absolute inset-x-[75px] bottom-[10px] flex h-[111px] items-start rounded-[32px] border-2 border-[#7a626a] bg-gradient-to-b from-[#62474d] to-[#451f27] pt-[15px] pr-4 pl-3.5 shadow-[0_0_70px_rgba(0,0,0,0.35)]">
      <div className="flex flex-1 justify-between">
        {apps.map((app) => (
          <DockItem key={app.name} app={app} />
        ))}
      </div>
      <span className="mr-[30px] ml-8 h-20 w-0.5 bg-[#7c636a]" />
      <div className="flex w-[348px] justify-between">
        {pinned.map((app) => (
          <DockItem key={app.name} app={app} />
        ))}
      </div>
      <span className="mr-[30px] ml-8 h-20 w-0.5 bg-[#7c636a]" />
      <button aria-label="Trash">
        <svg width="70" height="80" viewBox="0 0 70 80">
          <defs>
            <linearGradient id="bin" x1="0" y1="0" x2="1" y2="0">
              <stop offset="0" stopColor="#737a7f" />
              <stop offset="0.5" stopColor="#565d62" />
              <stop offset="1" stopColor="#80868a" />
            </linearGradient>
          </defs>
          <path d="M4 6 L13 70 Q16 77 35 77 Q54 77 57 70 L66 6Z" fill="url(#bin)" />
          <ellipse cx="35" cy="6" rx="31" ry="6" fill="#6a5b61" stroke="#99999c" strokeWidth="1.5" />
        </svg>
      </button>
    </nav>
  );
}

export default function App() {
  return (
    <div className="relative flex min-h-screen flex-col bg-gradient-to-r from-[#3a0310] to-[#300410] pb-[94px] font-['Inter',sans-serif]">
      <Wallpaper />
      <MenuBar />
      <div className="relative mt-8 flex flex-1 flex-col overflow-hidden rounded-[20px] bg-[#202124] shadow-[inset_0_2px_0_#77787a]">
        <TabStrip />
        <Toolbar />
        <main className="flex flex-1 flex-col bg-white font-['Liberation_Sans',Arial,sans-serif]">
          <CourseBar />
          <QuizBar />
          <div className="grid flex-1 grid-cols-[1316fr_18px_1226fr]">
            <Problem />
            <div className="flex flex-col items-center pt-2 pb-2">
              <span className="h-[200px] w-0.5 bg-[#a48d98]" />
              <button aria-label="Resize columns" className="flex h-16 w-[18px] flex-col items-center justify-center gap-1.5 rounded-lg border-2 border-[#5c6b7b] bg-[#f4f6f8]">
                <i className="size-1 bg-[#444]" />
                <i className="size-1 bg-[#444]" />
                <i className="size-1 bg-[#444]" />
              </button>
              <span className="w-0.5 flex-1 bg-[#a48d98]" />
            </div>
            <GraphPanel />
          </div>
          <Keypad />
          <Footer />
        </main>
      </div>
      <Dock />
    </div>
  );
}
